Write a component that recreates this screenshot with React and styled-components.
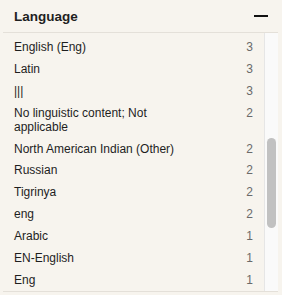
import React from "react";
import styled, { createGlobalStyle } from "styled-components";

const GlobalStyle = createGlobalStyle`
  html, body {
    margin: 0;
    padding: 0;
    background: #f7f4ee;
  }
  body {
    font-family: "Liberation Sans", Arial, sans-serif;
  }
`;

const Panel = styled.section`
  width: 282px;
  height: 295px;
  background: #f7f4ee;
  display: flex;
  flex-direction: column;
`;

const Header = styled.header`
  height: 32px;
  display: flex;
  align-items: center;
  justify-content: space-between;
  padding: 0 14px 0 14px;
`;

const Title = styled.h3`
  margin: 0;
  font-size: 13.5px;
  font-weight: bold;
  color: #1f1f1f;
`;

const Minus = styled.span`
  display: block;
  width: 14px;
  height: 2px;
  background: #111;
`;

const Body = styled.div`
  margin: 0 4px 0 3px;
  height: 258px;
  border-top: 1px solid #e4e0d9;
  border-bottom: 1px solid #e4e0d9;
  display: flex;
`;

const List = styled.ul`
  flex: 1;
  list-style: none;
  margin: 0;
  padding: 4px 0 0;
  overflow: hidden;
`;

const Row = styled.li`
  display: flex;
  justify-content: space-between;
  align-items: flex-start;
  gap: 16px;
  padding: 4px 11px;
  font-size: 12px;
  line-height: 13.9px;
  color: #1e1e1e;
`;

const Label = styled.span`
  flex: 1;
  max-width: 175px;
`;

const Count = styled.span`
  color: #6a6a6a;
`;

const Track = styled.div`
  width: 13px;
  background: #fafafa;
  border-left: 1px solid #e6e6e6;
  display: flex;
  flex-direction: column;
  align-items: center;
  padding-top: 105px;
`;

const Thumb = styled.div`
  width: 9px;
  height: 90px;
  border-radius: 5px;
  background: #c1c1c1;
`;

const languages = [
  ["English (Eng)", 3],
  ["Latin", 3],
  ["|||", 3],
  ["No linguistic content; Not applicable", 2],
  ["North American Indian (Other)", 2],
  ["Russian", 2],
  ["Tigrinya", 2],
  ["eng", 2],
  ["Arabic", 1],
  ["EN-English", 1],
  ["Eng", 1],
];

export default function App() {
  return (
    <>
      <GlobalStyle />
      <Panel>
        <Header>
          <Title>Language</Title>
          <Minus />
        </Header>
        <Body>
          <List>
            {languages.map(([name, count]) => (
              <Row key={name}>
                <Label>{name}</Label>
                <Count>{count}</Count>
              </Row>
            ))}
          </List>
          <Track>
            <Thumb />
          </Track>
        </Body>
      </Panel>
    </>
  );
}
